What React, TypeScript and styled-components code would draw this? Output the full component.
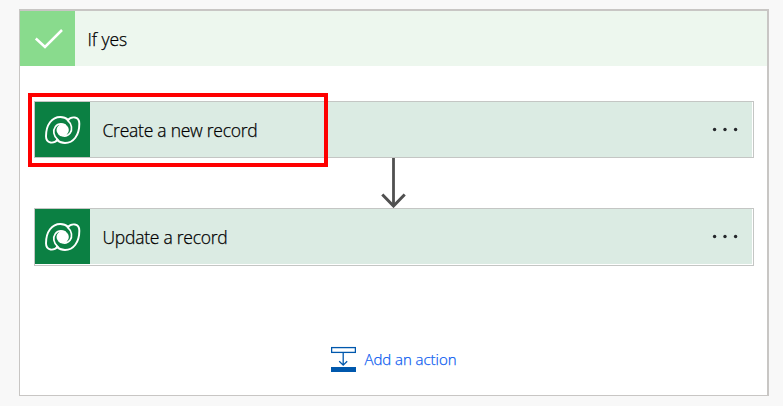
import React from "react";
import styled, { createGlobalStyle } from "styled-components";

const GlobalStyle = createGlobalStyle`
  * { box-sizing: border-box; }
  body {
    margin: 0;
    background: #f8f8f8;
    color: #000;
    font-family: "Segoe UI", "Open Sans", "Noto Sans", sans-serif;
  }
`;

const Page = styled.main`
  height: 406px;
  padding: 9px 14px 10px 19px;
  overflow: hidden;
`;

const Panel = styled.section`
  display: flex;
  flex-direction: column;
  height: 387px;
  background: #fff;
  border: solid #c8c6c4;
  border-width: 2px 2px 1px 1px;
`;

const PanelHeader = styled.header`
  display: flex;
  align-items: center;
  height: 55px;
  flex: none;
  background: #edf7ee;
`;

const Tile = styled.div<{ $color: string }>`
  display: flex;
  align-items: center;
  justify-content: center;
  flex: none;
  width: 55px;
  height: 55px;
  background: ${(p) => p.$color};
`;

const Label = styled.span<{ $spacing: number }>`
  margin-left: 12.5px;
  font-size: 17.5px;
  font-weight: 300;
  -webkit-text-stroke: 0.25px currentColor;
  line-height: 24px;
  letter-spacing: ${(p) => p.$spacing}px;
  white-space: nowrap;
`;

const Steps = styled.div`
  display: flex;
  flex-direction: column;
  padding: 35px 13px 0 14px;
`;

const StepWrap = styled.div`
  position: relative;
`;

const Card = styled.article<{ $gap: number }>`
  display: flex;
  border: 1px solid #c4c6c4;
  padding: 0 1px ${(p) => p.$gap}px 0;
  background: #fff;
`;

const CardBody = styled.div`
  display: flex;
  flex: 1;
  align-items: center;
  justify-content: space-between;
  padding-right: 13px;
  background: #dbebe3;
`;

const MenuButton = styled.button`
  display: flex;
  padding: 0;
  border: 0;
  background: none;
`;

const Highlight = styled.div`
  position: absolute;
  left: -6px;
  top: -8px;
  width: 300px;
  height: 74px;
  border: 4px solid #fe0000;
`;

const Connector = styled.div`
  display: flex;
  justify-content: center;
  height: 50px;
`;

const AddAction = styled.button`
  display: flex;
  align-items: center;
  align-self: flex-start;
  gap: 8.5px;
  margin: 80px 0 0 311px;
  padding: 0;
  border: 0;
  background: none;
  color: #0b5cf0;
  font-family: inherit;
  font-size: 15px;
  font-weight: 300;
  -webkit-text-stroke: 0.25px currentColor;
  line-height: 26px;
  letter-spacing: -0.05px;
  white-space: nowrap;
`;

const CheckIcon = () => (
  <svg width="55" height="55" viewBox="0 0 55 55" fill="none">
    <path d="M15.8 27.5 L25 36 L42 19" stroke="#fff" strokeWidth="2.5" />
  </svg>
);

const lobe = "M86 30 C79 24 71 21 62 21 C37 21 19 44 19 79 C19 102 43 102 54 89";
const inner = "M54 89 C41 78 39 61 47 50 C53 42 64 40 76 44";

const DataverseIcon = () => (
  <svg width="55" height="55" viewBox="-14 -24 165 165" fill="none">
    <circle cx="69" cy="60" r="18.5" fill="#fff" />
    {[0, 180].map((angle) => (
      <g
        key={angle}
        transform={`rotate(${angle} 69 60)`}
        stroke="#fff"
        strokeLinecap="round"
      >
        <path d={lobe} strokeWidth="5.8" />
        <path d={inner} strokeWidth="5" />
      </g>
    ))}
  </svg>
);

const Dots = () => (
  <svg width="27" height="6" viewBox="0 0 27 6" fill="#25272b">
    <circle cx="2.6" cy="2.5" r="1.7" />
    <circle cx="13" cy="2.5" r="1.7" />
    <circle cx="23.6" cy="2.5" r="1.7" />
  </svg>
);

const ArrowDown = () => (
  <svg width="26" height="50" viewBox="0 0 26 50" fill="none" stroke="#505050">
    <path d="M12.5 0 V48" strokeWidth="2.8" />
    <path d="M1.3 36.5 L12.5 48 L23.7 36.5" strokeWidth="3" />
  </svg>
);

const InsertIcon = () => (
  <svg width="25" height="26" viewBox="0 0 25 26" fill="none" stroke="#0058ad">
    <rect x="0.6" y="1.6" width="23.8" height="4.8" strokeWidth="1.3" />
    <path d="M12.2 6 V19 M8.2 15.2 L12.2 19.2 L16.2 15.2" strokeWidth="1.3" />
    <rect y="21" width="25" height="5" fill="#0058ad" stroke="none" />
  </svg>
);

type StepProps = { label: string; spacing: number; gap?: number };

const Step = ({ label, spacing, gap = 0 }: StepProps) => (
  <Card $gap={gap}>
    <Tile $color="#0b8043">
      <DataverseIcon />
    </Tile>
    <CardBody>
      <Label $spacing={spacing}>{label}</Label>
      <MenuButton aria-label="More options">
        <Dots />
      </MenuButton>
    </CardBody>
  </Card>
);

export default function App() {
  return (
    <>
      <GlobalStyle />
      <Page>
        <Panel>
          <PanelHeader>
            <Tile $color="#89db8d">
              <CheckIcon />
            </Tile>
            <Label $spacing={-0.05}>If yes</Label>
          </PanelHeader>
          <Steps>
            <StepWrap>
              <Step label="Create a new record" spacing={-0.25} />
              <Highlight />
            </StepWrap>
            <Connector>
              <ArrowDown />
            </Connector>
            <Step label="Update a record" spacing={-0.25} gap={1} />
          </Steps>
          <AddAction>
            <InsertIcon />
            Add an action
          </AddAction>
        </Panel>
      </Page>
    </>
  );
}
